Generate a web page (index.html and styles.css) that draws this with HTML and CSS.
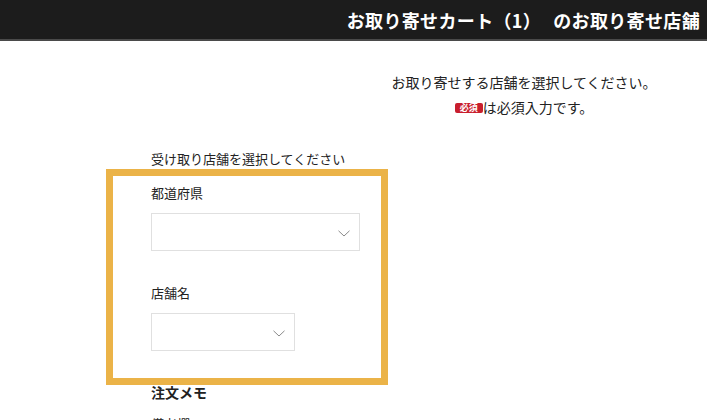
FILE: index.html
```html
<!DOCTYPE html>
<html lang="ja">
<head>
<meta charset="utf-8">
<title>お取り寄せ店舗</title>
<link rel="stylesheet" href="styles.css">
</head>
<body>
<header class="topbar">
  <h1 class="topbar-title">お取り寄せカート（1）<span class="gap"></span>のお取り寄せ店舗</h1>
</header>
<main class="page">
  <section class="intro">
    <p class="intro-line">お取り寄せする店舗を選択してください。</p>
    <p class="intro-line intro-req"><span class="badge">必須</span>は必須入力です。</p>
  </section>
  <section class="form">
    <p class="form-title">受け取り店舗を選択してください</p>
    <div class="box">
      <p class="field-label">都道府県</p>
      <div class="select select-wide">
        <svg class="chev" width="12" height="7" viewBox="0 0 12 7"><path d="M0.5 0.8 L6 6 L11.5 0.8" fill="none" stroke="#8a8a8a" stroke-width="1"/></svg>
      </div>
      <p class="field-label field-label-2">店舗名</p>
      <div class="select select-narrow">
        <svg class="chev" width="12" height="7" viewBox="0 0 12 7"><path d="M0.5 0.8 L6 6 L11.5 0.8" fill="none" stroke="#8a8a8a" stroke-width="1"/></svg>
      </div>
    </div>
    <h2 class="memo-title">注文メモ</h2>
    <p class="memo-label">備考欄</p>
  </section>
</main>
</body>
</html>
```
FILE: styles.css
```css
* { box-sizing: border-box; }
html, body { margin: 0; padding: 0; background: #fff; }
body {
  font-family: "Noto Sans CJK JP", "Noto Sans", sans-serif;
  color: #222;
  overflow: hidden;
  height: 420px;
}
p, h1, h2 { margin: 0; }

.topbar {
  height: 41px;
  background: #1c1c1c;
  border-bottom: 2px solid #4a4a4a;
  display: flex;
  align-items: center;
  justify-content: flex-end;
  padding-right: 7px;
}
.topbar-title {
  color: #fff;
  font-size: 18px;
  font-weight: 700;
  line-height: 24px;
  letter-spacing: 0.35px;
  white-space: nowrap;
}
.gap { display: inline-block; width: 12px; }

.intro {
  margin-top: 29px;
  margin-left: 341px;
  width: 366px;
  text-align: center;
}
.intro-line {
  font-size: 14px;
  line-height: 25px;
}
.intro-req {
  display: flex;
  justify-content: center;
  align-items: center;
  height: 25px;
}
.badge {
  display: inline-block;
  width: 28px;
  height: 10px;
  line-height: 10px;
  font-size: 9px;
  font-weight: 700;
  color: #fff;
  background: #c81e2d;
  border-radius: 2px;
  text-align: center;
}

.form {
  margin-left: 106px;
  width: 282px;
  margin-top: 29px;
}
.form-title {
  padding-left: 45px;
  font-size: 13px;
  line-height: 20px;
  white-space: nowrap;
}
.box {
  border: 7px solid #ebb348;
  padding: 7px 0 27px 38px;
}
.field-label {
  font-size: 13px;
  line-height: 20px;
}
.field-label-2 { margin-top: 32px; }
.select {
  margin-top: 10px;
  height: 38px;
  border: 1px solid #e0e0e0;
  background: #fff;
  display: flex;
  align-items: center;
  justify-content: flex-end;
  padding-right: 9px;
  padding-top: 2px;
}
.select-wide { width: 209px; }
.select-narrow { width: 144px; }
.chev { display: block; }

.memo-title {
  padding-left: 45px;
  font-size: 14px;
  font-weight: 700;
  line-height: 14px;
  margin-top: 0;
}
.memo-label {
  padding-left: 45px;
  font-size: 13px;
  line-height: 20px;
  margin-top: 15px;
}
```
